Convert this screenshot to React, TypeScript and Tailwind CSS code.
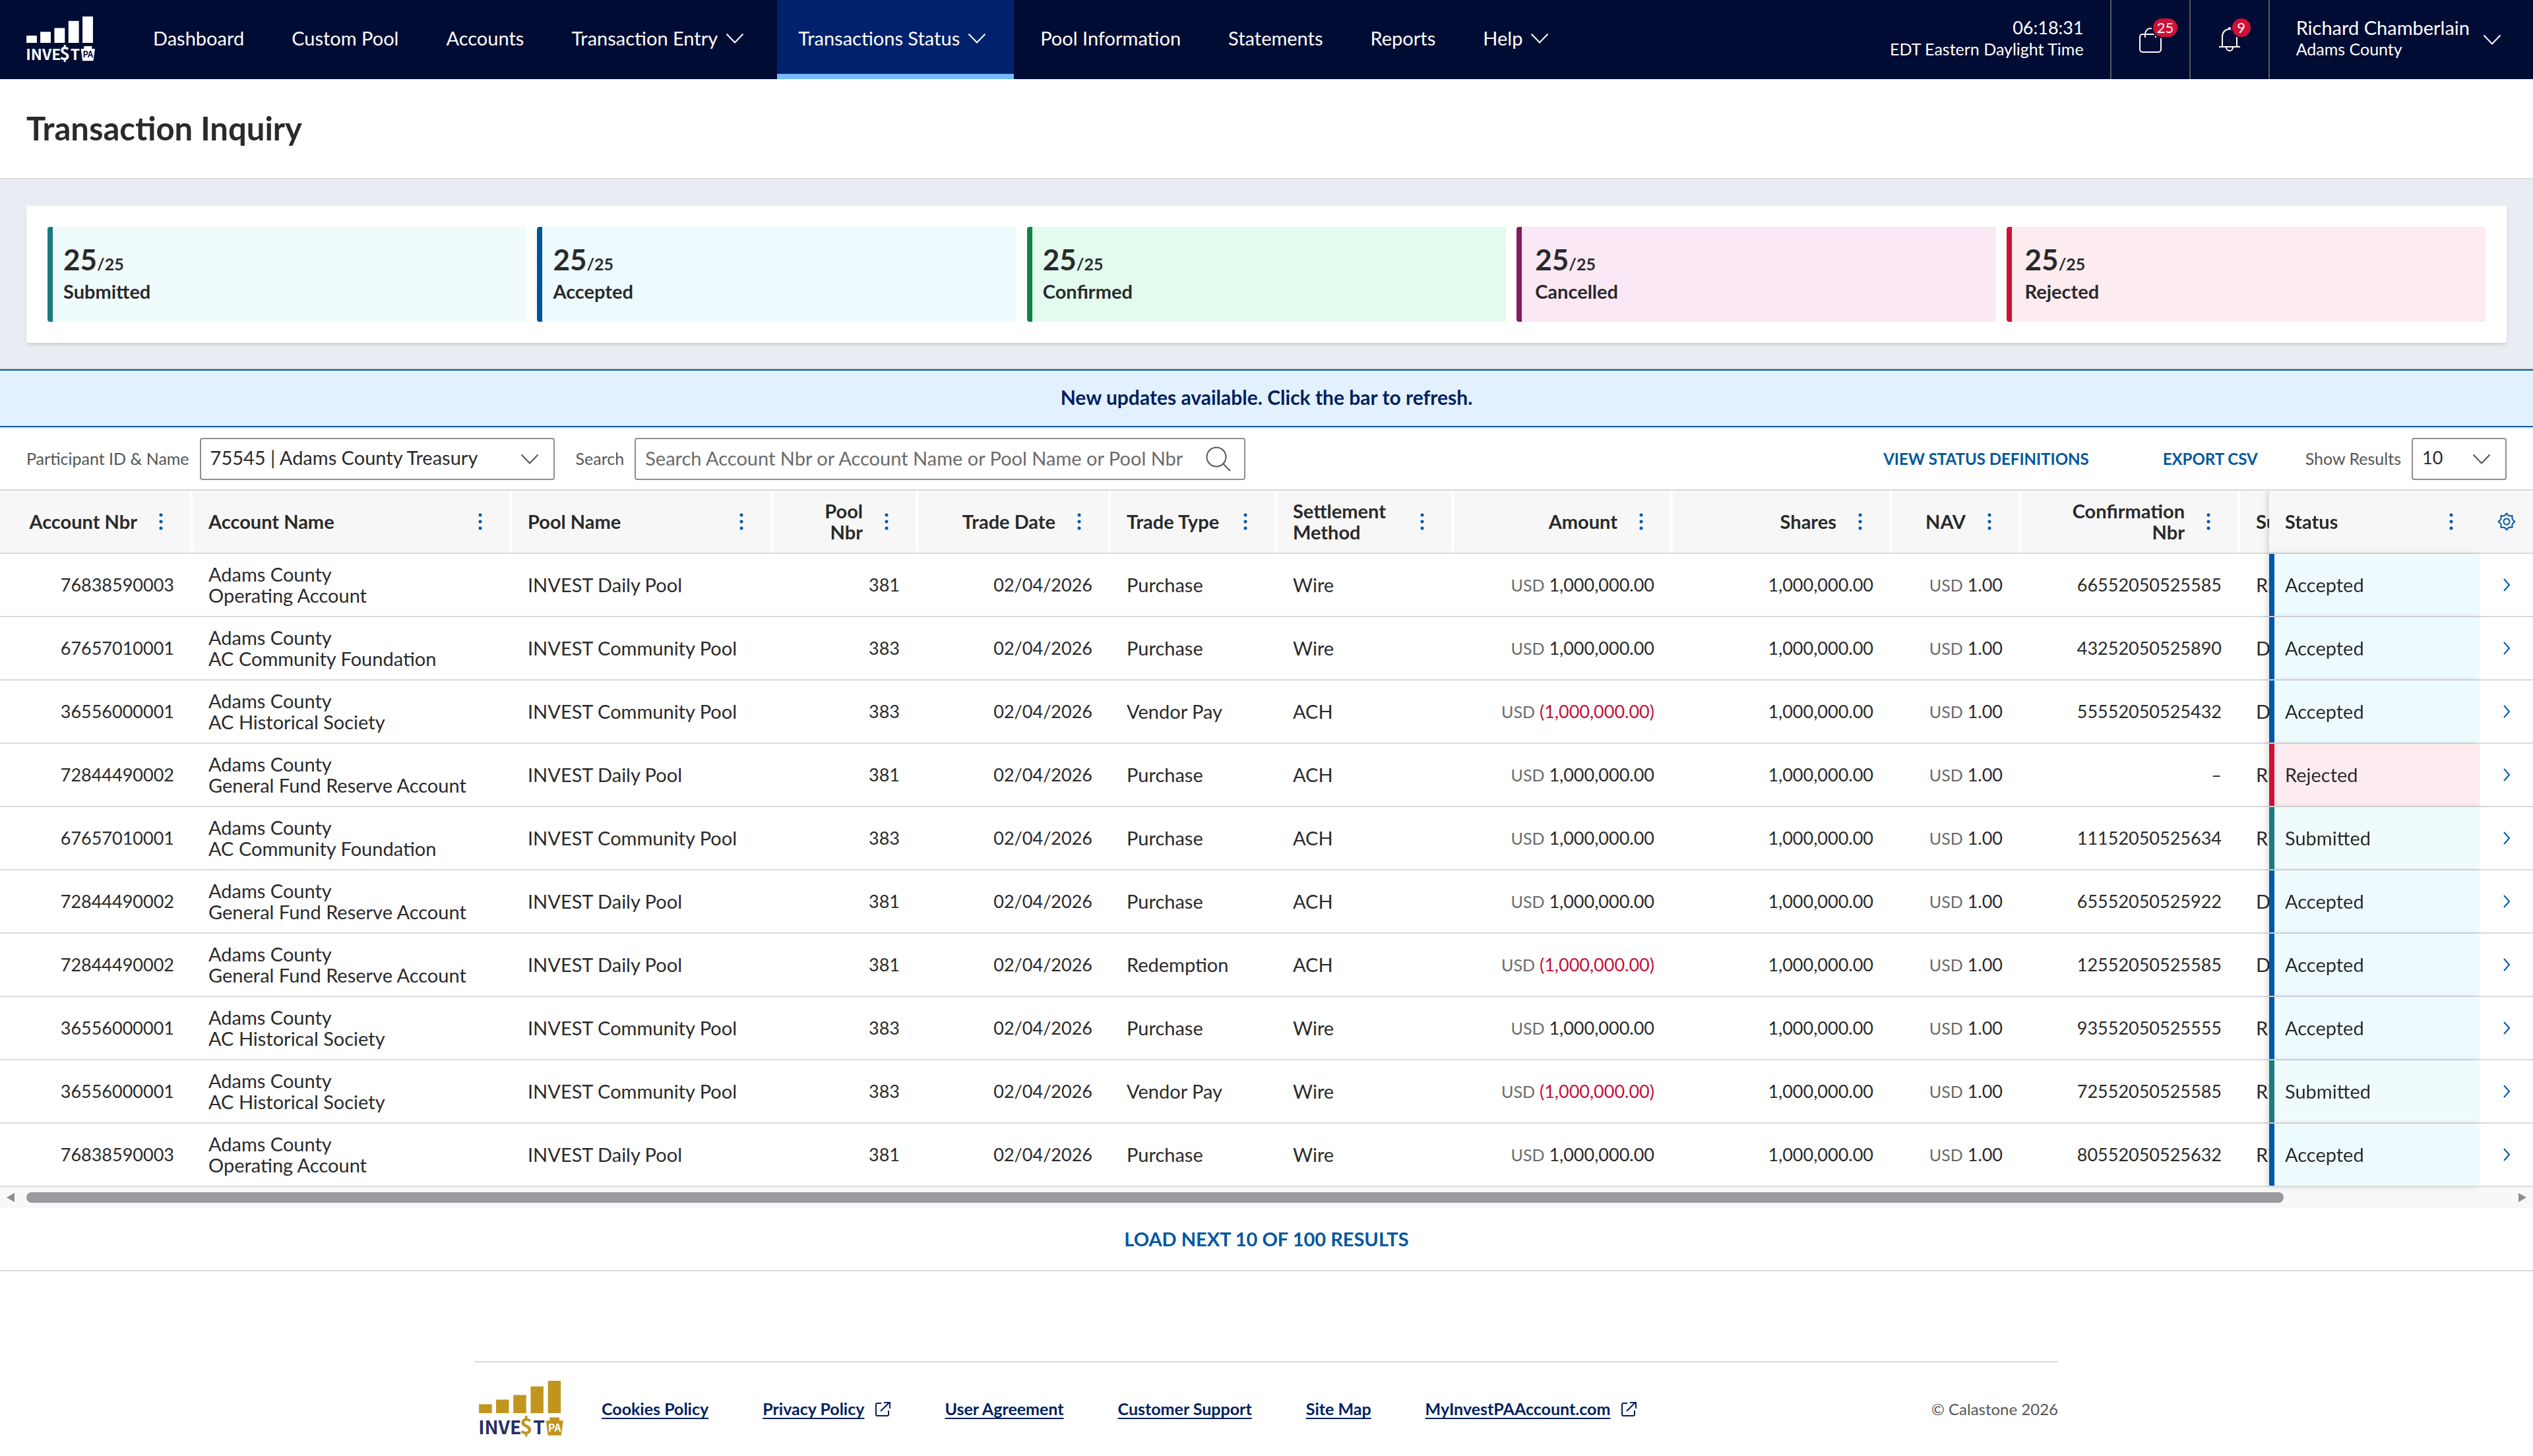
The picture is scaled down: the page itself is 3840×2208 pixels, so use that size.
import { useState } from "react";
import { clsx } from "clsx";

type Status = "Submitted" | "Accepted" | "Confirmed" | "Cancelled" | "Rejected";

interface Transaction {
    account: string;
    name: string;
    pool: string;
    poolNbr: string;
    type: string;
    method: string;
    negative?: boolean;
    confirmation: string;
    by: string;
    status: Status;
}

interface Column {
    label: string;
    width: string;
    right?: boolean;
}

const navItems = [
    { label: "Dashboard" },
    { label: "Custom Pool" },
    { label: "Accounts" },
    { label: "Transaction Entry", menu: true },
    { label: "Transactions Status", menu: true, active: true },
    { label: "Pool Information" },
    { label: "Statements" },
    { label: "Reports" },
    { label: "Help", menu: true },
];

const tiles = [
    { label: "Submitted", style: "border-[#1d7b7f] bg-[#f0fbfb] pl-4" },
    { label: "Accepted", style: "border-[#00568f] bg-[#edfbff] pl-4" },
    { label: "Confirmed", style: "border-[#12804a] bg-[#e3fbef] pl-4" },
    { label: "Cancelled", style: "border-[#86195f] bg-[#fae8f4] pl-5" },
    { label: "Rejected", style: "border-[#cf1138] bg-[#fcecef] pl-5" },
];

const columns: Column[] = [
    { label: "Account Nbr", width: "w-[292px]", right: true },
    { label: "Account Name", width: "w-[484px]" },
    { label: "Pool Name", width: "w-[396px]" },
    { label: "Pool\nNbr", width: "w-[220px]", right: true },
    { label: "Trade Date", width: "w-[292px]", right: true },
    { label: "Trade Type", width: "w-[252px]" },
    { label: "Settlement\nMethod", width: "w-[268px]" },
    { label: "Amount", width: "w-[332px]", right: true },
    { label: "Shares", width: "w-[332px]", right: true },
    { label: "NAV", width: "w-[196px]", right: true },
    { label: "Confirmation\nNbr", width: "w-[332px]", right: true },
];

const DAILY = "INVEST Daily Pool";
const COMMUNITY = "INVEST Community Pool";

const transactions: Transaction[] = [
    { account: "76838590003", name: "Operating Account", pool: DAILY, poolNbr: "381", type: "Purchase", method: "Wire", confirmation: "66552050525585", by: "Ri", status: "Accepted" },
    { account: "67657010001", name: "AC Community Foundation", pool: COMMUNITY, poolNbr: "383", type: "Purchase", method: "Wire", confirmation: "43252050525890", by: "D", status: "Accepted" },
    { account: "36556000001", name: "AC Historical Society", pool: COMMUNITY, poolNbr: "383", type: "Vendor Pay", method: "ACH", negative: true, confirmation: "55552050525432", by: "D", status: "Accepted" },
    { account: "72844490002", name: "General Fund Reserve Account", pool: DAILY, poolNbr: "381", type: "Purchase", method: "ACH", confirmation: "–", by: "Ri", status: "Rejected" },
    { account: "67657010001", name: "AC Community Foundation", pool: COMMUNITY, poolNbr: "383", type: "Purchase", method: "ACH", confirmation: "11152050525634", by: "Ri", status: "Submitted" },
    { account: "72844490002", name: "General Fund Reserve Account", pool: DAILY, poolNbr: "381", type: "Purchase", method: "ACH", confirmation: "65552050525922", by: "D", status: "Accepted" },
    { account: "72844490002", name: "General Fund Reserve Account", pool: DAILY, poolNbr: "381", type: "Redemption", method: "ACH", negative: true, confirmation: "12552050525585", by: "D", status: "Accepted" },
    { account: "36556000001", name: "AC Historical Society", pool: COMMUNITY, poolNbr: "383", type: "Purchase", method: "Wire", confirmation: "93552050525555", by: "Ri", status: "Accepted" },
    { account: "36556000001", name: "AC Historical Society", pool: COMMUNITY, poolNbr: "383", type: "Vendor Pay", method: "Wire", negative: true, confirmation: "72552050525585", by: "Ri", status: "Submitted" },
    { account: "76838590003", name: "Operating Account", pool: DAILY, poolNbr: "381", type: "Purchase", method: "Wire", confirmation: "80552050525632", by: "Ri", status: "Accepted" },
];

// inset bar on the left plus the drop shadow of the pinned columns
const statusCell: Record<Status, string> = {
    Submitted: "bg-[#f0fbfb] shadow-[inset_8px_0_0_#1d7b7f,-4px_0_8px_rgba(0,0,0,0.12)]",
    Accepted: "bg-[#edfbff] shadow-[inset_8px_0_0_#0058a8,-4px_0_8px_rgba(0,0,0,0.12)]",
    Confirmed: "bg-[#e3fbef] shadow-[inset_8px_0_0_#12804a,-4px_0_8px_rgba(0,0,0,0.12)]",
    Cancelled: "bg-[#fae8f4] shadow-[inset_8px_0_0_#86195f,-4px_0_8px_rgba(0,0,0,0.12)]",
    Rejected: "bg-[#fcecef] shadow-[inset_8px_0_0_#cf1138,-4px_0_8px_rgba(0,0,0,0.12)]",
};

function Chevron({ className }: { className?: string }) {
    return (
        <svg viewBox="0 0 28 16" className={clsx("w-7 h-4 shrink-0", className)} fill="none" stroke="currentColor" strokeWidth="2" aria-hidden="true">
            <path d="M1.500 1.500 14 14.500 26.500 1.500" />
        </svg>
    );
}

function Logo({ className, bars, letters, badge }: { className: string; bars: string; letters: string; badge: string }) {
    return (
        <svg viewBox="80 72 380 256" className={clsx("overflow-visible", className)} role="img" aria-label="INVEST PA">
            <g fill={bars}>
                <path d="M80 178h58v40H80zM157 157h58v61h-58zM235 136h58v82h-58zM313 97h58v121h-58zM391 72h58v146h-58z" />
                <path d="M399 237h44v14h17l-9 67h-60l-9-67h17z" />
            </g>
            <g fontFamily="'Noto Sans CJK JP', sans-serif" fontWeight="700">
                <text x="77" y="312" fontSize="84" fill={letters}>INVE</text>
                <text x="264" y="314" fontSize="98" fill={bars}>$</text>
                <text x="324" y="312" fontSize="84" fill={letters}>T</text>
                <text x="421" y="300" fontSize="46" fill={badge} textAnchor="middle">PA</text>
            </g>
        </svg>
    );
}

function Dots({ label }: { label: string }) {
    return (
        <button type="button" aria-label={label + " column menu"} className="w-6 h-8 shrink-0 flex items-center justify-center text-[#0058a8]">
            <svg viewBox="0 0 6 26" className="w-[6px] h-[26px]" fill="currentColor" aria-hidden="true">
                <circle cx="3" cy="3" r="2.500" />
                <circle cx="3" cy="13" r="2.500" />
                <circle cx="3" cy="23" r="2.500" />
            </svg>
        </button>
    );
}

function External() {
    return (
        <svg viewBox="0 0 24 24" className="w-6 h-6" fill="none" stroke="currentColor" strokeWidth="2" aria-hidden="true">
            <path d="M10 3H4a2 2 0 0 0-2 2v15a2 2 0 0 0 2 2h15a2 2 0 0 0 2-2v-6M14 2h9v9M22.500 1.500 9 15" />
        </svg>
    );
}

function Header() {
    return (
        <header className="h-[120px] bg-[#000c33] text-white flex items-stretch">
            <a href="#" className="flex items-center pl-10 pr-14">
                <Logo className="w-[104px] h-[70px]" bars="#ffffff" letters="#ffffff" badge="#000c33" />
            </a>
            <nav className="flex items-stretch gap-2">
                {navItems.map(item => (
                    <a
                        key={item.label}
                        href="#"
                        className={clsx(
                            "flex items-center gap-3 pl-8 pb-1 border-y-8 border-t-transparent whitespace-nowrap",
                            item.menu ? "pr-[42px]" : "pr-8",
                            item.active ? "bg-[#00216b] border-b-[#78baff]" : "border-b-transparent"
                        )}
                    >
                        {item.label}
                        {item.menu && <Chevron />}
                    </a>
                ))}
            </nav>
            <div className="ml-auto flex items-stretch">
                <div className="flex flex-col justify-center text-right leading-8 pr-10 pb-1">
                    <span className="text-[27px]">06:18:31</span>
                    <span className="text-[25px]">EDT Eastern Daylight Time</span>
                </div>
                <button type="button" aria-label="Basket" className="w-[120px] border-l-2 border-[#58595f] flex items-center justify-center">
                    <span className="relative">
                        <svg viewBox="0 0 40 44" className="w-10 h-11" fill="none" stroke="currentColor" strokeWidth="2" aria-hidden="true">
                            <rect x="4" y="14" width="32" height="27" rx="4" />
                            <path d="M12 19v-5a8 9 0 0 1 16 0v5" />
                        </svg>
                        <span className="absolute -top-[10px] left-6 rounded-full bg-[#cf1138] ring-2 ring-[#000c33] px-[6px] h-7 flex items-center text-[22px] leading-7">25</span>
                    </span>
                </button>
                <button type="button" aria-label="Notifications" className="w-[120px] border-l-2 border-[#58595f] flex items-center justify-center">
                    <span className="relative">
                        <svg viewBox="0 0 40 44" className="w-10 h-11" fill="none" stroke="currentColor" strokeWidth="2" aria-hidden="true">
                            <path d="M9 32V17a11 11 0 0 1 22 0v15M4 33h32M15 34a5 5 0 0 0 10 0" />
                            <circle cx="20" cy="5" r="2" fill="currentColor" stroke="none" />
                        </svg>
                        <span className="absolute -top-[10px] left-6 rounded-full bg-[#cf1138] ring-2 ring-[#000c33] w-7 h-7 flex items-center justify-center text-[22px] leading-7">9</span>
                    </span>
                </button>
                <button type="button" className="border-l-2 border-[#58595f] pl-10 pr-12 flex items-center gap-5 text-left">
                    <span className="flex flex-col leading-8 pb-1">
                        <span>Richard Chamberlain</span>
                        <span className="text-[25px]">Adams County</span>
                    </span>
                    <Chevron />
                </button>
            </div>
        </header>
    );
}

function Toolbar() {
    const [search, setSearch] = useState("");

    return (
        <div className="flex items-center px-10 pt-4 pb-[14px] text-[25px] text-[#555555]">
            <label htmlFor="participant">Participant ID &amp; Name</label>
            <div className="relative ml-4 w-[538px] h-16">
                <select id="participant" className="appearance-none w-full h-full border-2 border-[#8e8e8e] rounded pl-[14px] pb-1 text-[29px] text-[#2a2a2a] bg-white">
                    <option>75545 | Adams County Treasury</option>
                </select>
                <Chevron className="absolute right-6 top-6 pointer-events-none" />
            </div>
            <label htmlFor="search" className="ml-8">Search</label>
            <div className="ml-4 w-[926px] h-16 border-2 border-[#8e8e8e] rounded flex items-center pl-[14px] pr-5">
                <input
                    id="search"
                    type="text"
                    placeholder="Search Account Nbr or Account Name or Pool Name or Pool Nbr"
                    className="grow min-w-0 h-full pb-1 outline-none text-[29px] text-[#2a2a2a] placeholder:text-[#6b6b6b]"
                    value={search}
                    onChange={(e) => setSearch(e.target.value)}
                />
                <svg viewBox="0 0 38 38" className="w-[38px] h-[38px] shrink-0" fill="none" stroke="currentColor" strokeWidth="2" aria-hidden="true">
                    <circle cx="16" cy="16" r="14.500" />
                    <path d="M26.500 26.500 37 37" />
                </svg>
            </div>
            <button type="button" className="ml-auto text-[24px] font-bold text-[#0057a0]">VIEW STATUS DEFINITIONS</button>
            <button type="button" className="ml-28 text-[24px] font-bold text-[#0057a0]">EXPORT CSV</button>
            <label htmlFor="page-size" className="ml-[72px]">Show Results</label>
            <div className="relative ml-4 w-36 h-16">
                <select id="page-size" className="appearance-none w-full h-full border-2 border-[#8e8e8e] rounded pl-[14px] pb-1 text-[27px] text-[#2a2a2a] bg-white">
                    <option>10</option>
                    <option>25</option>
                </select>
                <Chevron className="absolute right-6 top-6 pointer-events-none" />
            </div>
        </div>
    );
}

function TransactionTable() {
    const cell = "border-b-2 border-[#dadada] h-24 p-0";
    const text = clsx(cell, "pl-6");
    const number = clsx(cell, "pr-7 text-right text-[27px]");

    return (
        <div className="overflow-x-hidden border-t-2 border-[#dadada]">
            <table className="table-fixed border-separate border-spacing-0 w-[4217px] leading-8">
                <thead>
                    <tr className="bg-[#f7f7f7] h-24">
                        {columns.map(c => (
                            <th key={c.label} className={clsx("p-0 border-b-2 border-[#dadada] font-bold", c.width)}>
                                <div className={clsx("h-[94px] border-r-4 border-white pl-6 pr-8 flex items-center gap-6 whitespace-pre", c.right ? "justify-end text-right" : "justify-between text-left")}>
                                    {c.label}
                                    <Dots label={c.label} />
                                </div>
                            </th>
                        ))}
                        <th className="p-0 pl-6 border-b-2 border-[#dadada] text-left">Su</th>
                        <th className="sticky right-20 w-80 p-0 bg-[#f7f7f7] border-b-2 border-[#dadada] shadow-[-4px_0_8px_rgba(0,0,0,0.12)]">
                            <div className="pl-6 pr-8 flex items-center justify-between">
                                Status
                                <Dots label="Status" />
                            </div>
                        </th>
                        <th className="sticky right-0 w-20 p-0 bg-[#f7f7f7] border-b-2 border-[#dadada]">
                            <button type="button" aria-label="Table settings" className="flex w-full justify-center text-[#0058a8]">
                                <svg viewBox="0 0 28 28" className="w-7 h-7" fill="none" stroke="currentColor" strokeWidth="2" strokeLinejoin="round" aria-hidden="true">
                                    <path d="M11.500 4.500 14 1.500l2.500 3 2.200.9 3.900-.3-.3 3.900.9 2.200 3.300 2.800-3.300 2.800-.9 2.200.3 3.900-3.900-.3-2.200.9-2.500 3-2.500-3-2.200-.9-3.900.3.3-3.900-.9-2.200L1.500 14l3.300-2.800.9-2.200-.3-3.900 3.900.3z" />
                                    <circle cx="14" cy="14" r="4.500" />
                                </svg>
                            </button>
                        </th>
                    </tr>
                </thead>
                <tbody>
                    {transactions.map((t, i) => (
                        <tr key={i}>
                            <td className={number}>{t.account}</td>
                            <td className={text}>Adams County<br />{t.name}</td>
                            <td className={text}>{t.pool}</td>
                            <td className={number}>{t.poolNbr}</td>
                            <td className={number}>02/04/2026</td>
                            <td className={text}>{t.type}</td>
                            <td className={text}>{t.method}</td>
                            <td className={number}>
                                <span className="text-[25px] text-[#6b6b6b]">USD</span>{" "}
                                {t.negative ? <span className="text-[#c4103a]">(1,000,000.00)</span> : "1,000,000.00"}
                            </td>
                            <td className={number}>1,000,000.00</td>
                            <td className={number}>
                                <span className="text-[25px] text-[#6b6b6b]">USD</span> 1.00
                            </td>
                            <td className={number}>{t.confirmation}</td>
                            <td className={text}>{t.by}</td>
                            <td className={clsx(text, "sticky right-20", statusCell[t.status])}>{t.status}</td>
                            <td className={clsx(cell, "sticky right-0 bg-white")}>
                                <button type="button" aria-label={"Open " + t.account} className="flex w-full justify-center text-[#0058a8]">
                                    <svg viewBox="0 0 12 20" className="w-3 h-5" fill="none" stroke="currentColor" strokeWidth="2" aria-hidden="true">
                                        <path d="m2 1 8 9-8 9" />
                                    </svg>
                                </button>
                            </td>
                        </tr>
                    ))}
                </tbody>
            </table>
            <div className="h-8 bg-[#f8f8f8] flex items-center justify-between px-[10px] text-[#8e8e8e]">
                <svg viewBox="0 0 12 14" className="w-3 h-[14px]" fill="currentColor" aria-hidden="true"><path d="M12 0v14L0 7z" /></svg>
                <div className="grow mx-[18px]">
                    <div className="w-[91%] h-4 rounded-full bg-[#9b9a9f]" />
                </div>
                <svg viewBox="0 0 12 14" className="w-3 h-[14px]" fill="currentColor" aria-hidden="true"><path d="M0 0v14l12-7z" /></svg>
            </div>
        </div>
    );
}

function Footer() {
    const link = "flex items-center gap-4 font-bold text-[#001f5f]";
    const text = "underline underline-offset-4 decoration-2";

    return (
        <footer className="mt-[136px] mx-auto max-w-[2400px] border-t-2 border-[#dadada] pt-7 pb-7 pl-[6px] flex items-center text-[25px]">
            <Logo className="w-[128px] h-[86px]" bars="#c2951f" letters="#262f63" badge="#ffffff" />
            <div className="ml-[58px] flex gap-[82px]">
                <a href="#" className={link}><span className={text}>Cookies Policy</span></a>
                <a href="#" className={link}><span className={text}>Privacy Policy</span><External /></a>
                <a href="#" className={link}><span className={text}>User Agreement</span></a>
                <a href="#" className={link}><span className={text}>Customer Support</span></a>
                <a href="#" className={link}><span className={text}>Site Map</span></a>
                <a href="#" className={link}><span className={text}>MyInvestPAAccount.com</span><External /></a>
            </div>
            <span className="ml-auto text-[24px] text-[#555555]">© Calastone 2026</span>
        </footer>
    );
}

export default function App() {
    return (
        <div className="min-h-screen bg-white text-[#2a2a2a] text-[29px] font-['Lato',sans-serif]">
            <Header />

            <h1 className="h-[152px] border-b-2 border-[#dadada] px-10 flex items-center text-[49px] font-bold">Transaction Inquiry</h1>

            {/* Status totals */}
            <section className="bg-[#e9edf3] px-10 pt-10 pb-[38px] border-b-2 border-[#d5dae0]">
                <div className="bg-white rounded p-8 grid grid-cols-5 gap-4 shadow-md">
                    {tiles.map(t => (
                        <div key={t.label} className={clsx("h-36 rounded border-l-8 pb-1 flex flex-col justify-center font-bold", t.style)}>
                            <p className="text-[44px] leading-[48px]">25<span className="text-[25px]">/25</span></p>
                            <p className="leading-9">{t.label}</p>
                        </div>
                    ))}
                </div>
            </section>

            <button type="button" className="block w-full h-[88px] pb-1 bg-[#e3f1fe] border-y-2 border-[#0057a0] font-bold text-[30px] text-[#001f5f]">
                New updates available. Click the bar to refresh.
            </button>

            <Toolbar />
            <TransactionTable />

            <button type="button" className="block w-full h-24 border-b-2 border-[#dadada] font-bold text-[#0057a0]">
                LOAD NEXT 10 OF 100 RESULTS
            </button>

            <Footer />
        </div>
    );
}
